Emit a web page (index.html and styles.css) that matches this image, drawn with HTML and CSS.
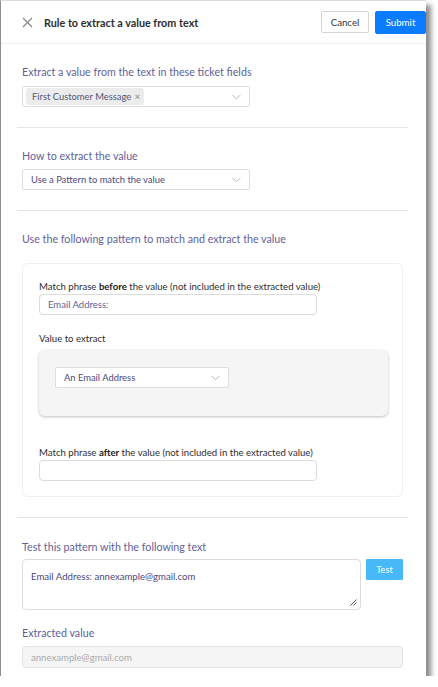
FILE: index.html
```html
<!DOCTYPE html>
<html lang="en">
<head>
<meta charset="utf-8">
<title>Rule to extract a value from text</title>
<link rel="stylesheet" href="styles.css">
</head>
<body>
<div class="panel">
  <header class="header">
    <div class="header-left">
      <svg class="close-icon" width="11" height="11" viewBox="0 0 11 11"><path d="M1 1L10 10M10 1L1 10" stroke="#8a8a8a" stroke-width="1.2" fill="none"/></svg>
      <h1 class="title">Rule to extract a value from text</h1>
    </div>
    <div class="header-actions">
      <button class="btn btn-cancel">Cancel</button>
      <button class="btn btn-submit">Submit</button>
    </div>
  </header>
  <main class="content">
    <section class="section s1">
      <div class="label">Extract a value from the text in these ticket fields</div>
      <div class="select">
        <span class="tag">First Customer Message <span class="tag-x">×</span></span>
        <svg class="chev" width="9" height="6" viewBox="0 0 9 6"><path d="M0.5 0.8L4.5 4.8L8.5 0.8" stroke="#b9b9b9" stroke-width="1" fill="none"/></svg>
      </div>
    </section>
    <section class="section s2">
      <div class="label">How to extract the value</div>
      <div class="select">
        <span class="select-text">Use a Pattern to match the value</span>
        <svg class="chev" width="9" height="6" viewBox="0 0 9 6"><path d="M0.5 0.8L4.5 4.8L8.5 0.8" stroke="#b9b9b9" stroke-width="1" fill="none"/></svg>
      </div>
    </section>
    <section class="section s3">
      <div class="label">Use the following pattern to match and extract the value</div>
      <div class="card">
        <div class="field-label">Match phrase <b>before</b> the value (not included in the extracted value)</div>
        <div class="input"><span class="input-text">Email Address:</span></div>
        <div class="field-label vlabel">Value to extract</div>
        <div class="value-box">
          <div class="select small">
            <span class="select-text">An Email Address</span>
            <svg class="chev" width="9" height="6" viewBox="0 0 9 6"><path d="M0.5 0.8L4.5 4.8L8.5 0.8" stroke="#b9b9b9" stroke-width="1" fill="none"/></svg>
          </div>
        </div>
        <div class="field-label alabel">Match phrase <b>after</b> the value (not included in the extracted value)</div>
        <div class="input"></div>
      </div>
    </section>
    <section class="section s4">
      <div class="label">Test this pattern with the following text</div>
      <div class="test-row">
        <div class="textarea">
          <span class="textarea-text">Email Address: annexample@gmail.com</span>
          <svg class="grip" width="8" height="8" viewBox="0 0 8 8"><path d="M7.5 1.5L1.5 7.5M7.5 4.5L4.5 7.5" stroke="#555" stroke-width="1" fill="none"/></svg>
        </div>
        <button class="btn btn-test">Test</button>
      </div>
      <div class="label elabel">Extracted value</div>
      <div class="input disabled"><span class="disabled-text">annexample@gmail.com</span></div>
    </section>
  </main>
</div>
</body>
</html>
```
FILE: styles.css
```css
* { box-sizing: border-box; }
html, body { margin: 0; padding: 0; background: #fff; }
body { font-family: Lato, "Noto Sans", sans-serif; color: #333; }

.panel {
  width: 426px;
  height: 676px;
  background: #fff;
  border-left: 1px solid #8f8f8f;
  border-top: 1px solid #dcdcdc;
  box-shadow: 5px 5px 5px rgba(0, 0, 0, 0.45);
  overflow: hidden;
}

.header {
  height: 43px;
  display: flex;
  align-items: center;
  justify-content: space-between;
  border-bottom: 1px solid #efefef;
  padding-left: 21px;
}
.header-left { display: flex; align-items: center; gap: 11px; }
.close-icon { display: block; }
.title { margin: 0; font-size: 10.8px; font-weight: 700; color: #2e2e2e; }
.header-actions { display: flex; gap: 6px; align-items: center; }
.btn {
  font-family: inherit;
  font-size: 9.7px;
  border-radius: 2px;
  padding: 0;
  cursor: pointer;
}
.btn-cancel {
  width: 48px; height: 22px;
  background: #fff;
  border: 1px solid #d5d5d5;
  color: #333;
}
.btn-submit {
  width: 51px; height: 23px;
  background: #0b7cff;
  border: 1px solid #0b7cff;
  color: #fff;
}

.content { padding: 0 18px 0 16px; }
.section { padding: 21px 5px 20px; border-bottom: 1px solid #e6e6e6; }
.section.s4 { border-bottom: none; padding-bottom: 0; padding-top: 22px; }
.label { font-size: 10.7px; line-height: 14px; color: #5f5f99; }

.select {
  margin-top: 7px;
  width: 228px;
  height: 21px;
  border: 1px solid #dedede;
  border-radius: 2px;
  display: flex;
  align-items: center;
  justify-content: space-between;
  padding: 0 8px 0 3px;
  background: #fff;
}
.s2 .select { margin-top: 6px; padding-left: 8px; }
.tag {
  background: #ececec;
  border-radius: 3px;
  font-size: 9.4px;
  color: #555577;
  padding: 1px 4px 1px 6px;
  line-height: 14px;
}
.tag-x { color: #888; font-size: 10px; margin-left: 1px; }
.select-text { font-size: 9.4px; color: #4a4a80; }

.s3 .label { margin-bottom: 17px; }
.card {
  border: 1px solid #f0f0f0;
  border-radius: 6px;
  padding: 16px 16px 15px 16px;
}
.field-label { font-size: 9.6px; line-height: 14px; color: #2e2e2e; }
.field-label b { font-weight: 700; color: #222; }
.input {
  width: 278px;
  height: 21px;
  border: 1px solid #dcdcdc;
  border-radius: 4px;
  display: flex;
  align-items: center;
  padding: 0 8px;
}
.input-text { font-size: 9.5px; color: #5f5f99; }
.vlabel { margin-top: 17px; }
.value-box {
  margin-top: 4px;
  width: 349px;
  height: 66px;
  background: #f5f5f5;
  border-radius: 6px;
  box-shadow: 0 1px 3px rgba(0, 0, 0, 0.25);
  padding: 17px 16px;
}
.select.small { margin-top: 0; width: 174px; padding-left: 8px; }
.alabel { margin-top: 30px; }

.test-row { margin-top: 5px; display: flex; gap: 5px; align-items: flex-start; }
.textarea {
  position: relative;
  width: 339px;
  height: 51px;
  border: 1px solid #dcdcdc;
  border-radius: 4px;
  padding: 4px 8px;
}
.textarea-text { font-size: 9.6px; color: #4a4a80; }
.grip { position: absolute; right: 3px; bottom: 3px; }
.btn-test {
  width: 37px; height: 21px;
  font-size: 9.2px;
  background: #47b9f6;
  border: 1px solid #47b9f6;
  color: #fff;
  border-radius: 1px;
}
.elabel { margin-top: 16px; }
.input.disabled {
  margin-top: 6px;
  width: 381px;
  height: 22px;
  background: #f5f5f5;
  border-color: #e3e3e3;
}
.disabled-text { font-size: 9.6px; color: #ababab; }
```
